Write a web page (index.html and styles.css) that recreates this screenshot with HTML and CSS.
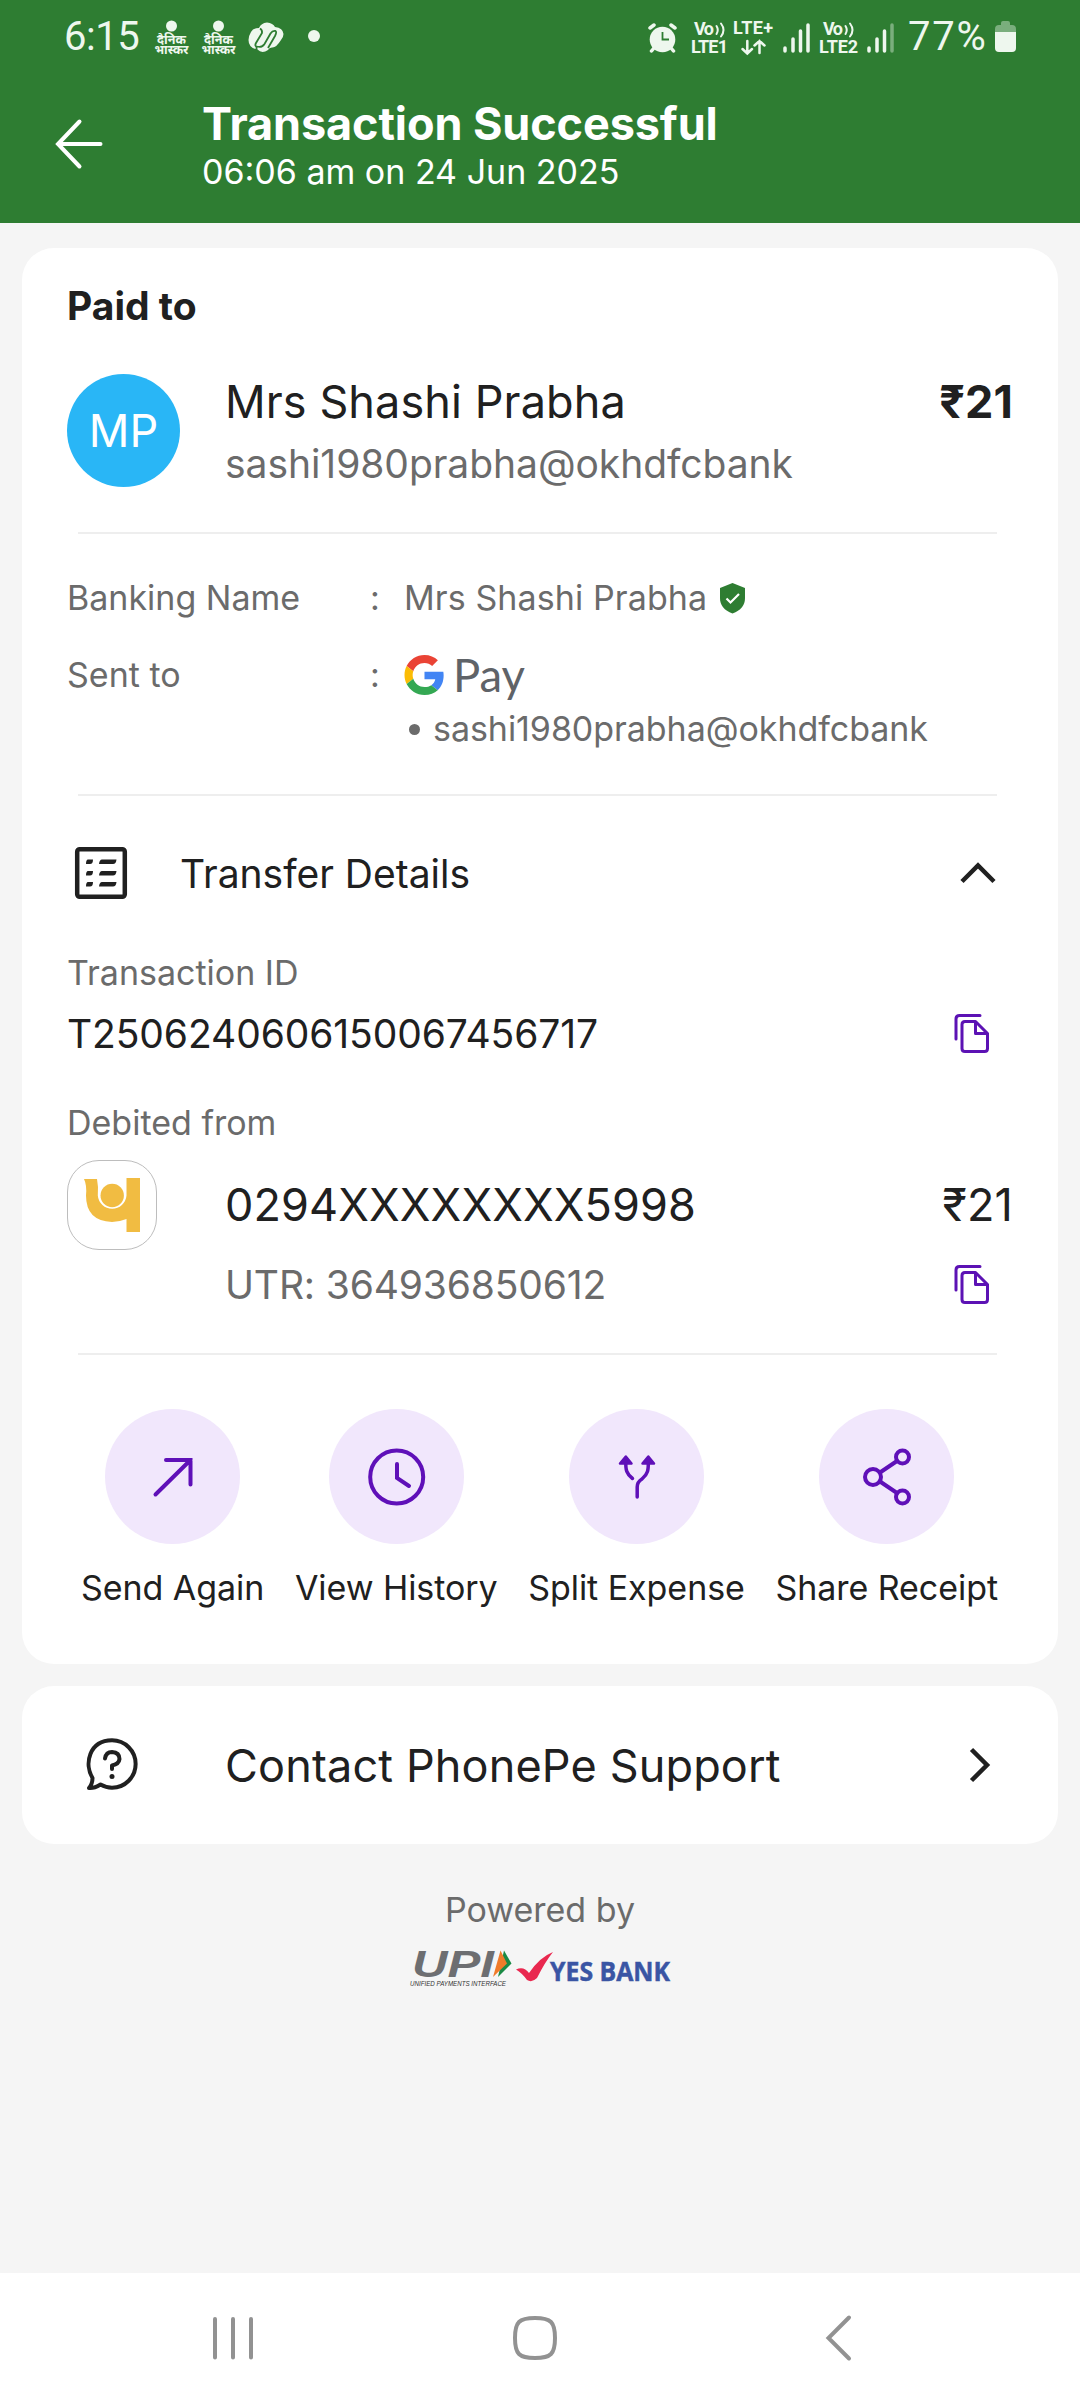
FILE: index.html
```html
<!DOCTYPE html>
<html lang="en">
<head>
<meta charset="utf-8">
<title>Transaction Successful</title>
<link rel="stylesheet" href="styles.css">
</head>
<body>
<header class="header">
  <div class="statusbar">
    <span class="clock">6:15</span>
    <svg class="news" viewBox="154 16 36 40" width="36" height="40"><circle cx="171.500" cy="26" r="5.500"/><text x="157" y="43.500" textLength="29" lengthAdjust="spacingAndGlyphs">दैनिक</text><text x="154.500" y="53.500" textLength="34" lengthAdjust="spacingAndGlyphs">भास्कर</text></svg>
    <svg class="news" viewBox="154 16 36 40" width="36" height="40"><circle cx="171.500" cy="26" r="5.500"/><text x="157" y="43.500" textLength="29" lengthAdjust="spacingAndGlyphs">दैनिक</text><text x="154.500" y="53.500" textLength="34" lengthAdjust="spacingAndGlyphs">भास्कर</text></svg>
    <svg class="knot" viewBox="248 16 36 40" width="36" height="40">
      <path class="fill" d="M251 32Q253 28 259 28Q261 23 267 22.500Q273 23 275 27Q283 28 283.500 34Q283.500 37 281 40Q276 48 272 47.500Q269 47.500 268 50Q262 54 257.500 49.500Q248.500 48 248.500 40Q248.500 36 251 32Z"/>
      <path class="cut" d="M256.500 50V46.500Q254.500 46 256 43L262 33Q262.500 30 260 28.500M257 46.500Q262 48 264.500 44L270.500 33.500Q272.500 30.500 275.500 31Q277 32 275 36L268 48"/>
    </svg>
    <span class="dot"></span>
    <span class="spacer"></span>
    <svg viewBox="648 16 30 40" width="30" height="40">
      <circle class="fill" cx="662.500" cy="39.500" r="12.800"/>
      <path class="line" stroke-width="3.500" d="M650 28L654 25M675 28L671 25M654 48L651.500 51M671 48L673.500 51"/>
      <path class="cut" stroke-width="3" d="M662.500 32V39.500H669"/>
    </svg>
    <svg class="volte" viewBox="690 16 40 40" width="40" height="40"><text x="694" y="35" textLength="20">Vo</text><path class="line" stroke-width="2" d="M716.500 26Q719 30 716.500 34M721 23.500Q726 30 721 36.500"/><text x="691" y="52.500" textLength="37">LTE1</text></svg>
    <svg class="volte lte" viewBox="732 16 42 40" width="42" height="40"><text x="733" y="34" textLength="40">LTE+</text><path class="line" stroke-width="2.500" d="M747.300 41V53M742.500 49L747.300 53.500L752 49M759.500 53V41M754.500 45.500L759.500 41L764.500 45.500"/></svg>
    <svg class="bars" viewBox="782 16 30 40" width="30" height="40"><path d="M785 48V51M793 39V51M800.500 31V51M808 25V51"/></svg>
    <svg class="volte volte2" viewBox="818 16 42 40" width="42" height="40"><text x="823" y="35" textLength="20">Vo</text><path class="line" stroke-width="2" d="M845.500 26Q848 30 845.500 34M850 23.500Q855 30 850 36.500"/><text x="819" y="52.500" textLength="39">LTE2</text></svg>
    <svg class="bars bars2" viewBox="866 16 30 40" width="30" height="40"><path d="M869 48V51M877 39V51M884.500 31V51"/><path opacity=".4" d="M892 25V51"/></svg>
    <span class="battery-level">77%</span>
    <svg viewBox="994 16 24 40" width="24" height="40"><path class="fill" opacity=".4" d="M995 32V29Q995 25 999 25H1001V23Q1001 21 1003 21H1008Q1010 21 1010 23V25H1012Q1016 25 1016 29V32Z"/><path class="fill" d="M995 32H1016V48Q1016 52 1012 52H999Q995 52 995 48Z"/></svg>
  </div>
  <div class="appbar">
    <svg class="back" viewBox="54 118 50 52" width="50" height="52"><path d="M79.500 121.500L58 144L79.500 166.500M58 144H100.500"/></svg>
    <div>
      <h1>Transaction Successful</h1>
      <p>06:06 am on 24 Jun 2025</p>
    </div>
  </div>
</header>

<main>
  <section class="card payment">
    <h2>Paid to</h2>
    <div class="payee">
      <div class="avatar">MP</div>
      <div class="payee-text">
        <div class="big">Mrs Shashi Prabha</div>
        <div class="medium muted">sashi1980prabha@okhdfcbank</div>
      </div>
      <div class="big amount strong">₹21</div>
    </div>
    <hr>
    <div class="facts">
      <span>Banking Name</span><span>:</span>
      <span class="verified">Mrs Shashi Prabha
        <svg viewBox="720 581 27 32" width="27" height="32"><path fill="#2e7d32" d="M733.500 582L746 587V597Q746 608 733.500 612.500Q721 608 721 597V587Z"/><path fill="none" stroke="#fff" stroke-width="2.200" d="M727.500 597.500L731.500 601.500L740 593"/></svg>
      </span>
      <span>Sent to</span><span>:</span>
      <div>
        <svg class="gpay" viewBox="403 652 126 54" width="126" height="54">
          <g transform="translate(403.500 654) scale(.833)">
            <path fill="#EA4335" d="M24 9.500c3.540 0 6.710 1.220 9.210 3.600l6.850-6.850C35.900 2.380 30.470 0 24 0 14.620 0 6.510 5.380 2.560 13.220l7.980 6.190C12.430 13.720 17.740 9.500 24 9.500z"/>
            <path fill="#4285F4" d="M46.980 24.550c0-1.570-.15-3.090-.38-4.550H24v9.020h12.940c-.58 2.960-2.260 5.480-4.780 7.180l7.730 6c4.510-4.180 7.090-10.360 7.090-17.650z"/>
            <path fill="#FBBC05" d="M10.530 28.590c-.48-1.450-.76-2.990-.76-4.590s.27-3.140.76-4.590l-7.980-6.190C.92 16.460 0 20.120 0 24c0 3.880.92 7.540 2.560 10.780l7.970-6.190z"/>
            <path fill="#34A853" d="M24 48c6.480 0 11.930-2.130 15.890-5.810l-7.730-6c-2.150 1.450-4.920 2.300-8.160 2.300-6.260 0-11.570-4.220-13.470-9.910l-7.980 6.190C6.510 42.620 14.620 48 24 48z"/>
          </g>
          <text x="452" y="691" textLength="72" lengthAdjust="spacingAndGlyphs">Pay</text>
        </svg>
        <div class="handle"><span class="bullet"></span>sashi1980prabha@okhdfcbank</div>
      </div>
    </div>
    <hr>
    <div class="transfer">
      <svg viewBox="74 846 54 54" width="54" height="54"><rect x="77.200" y="849.200" width="47.600" height="47.600" rx="2.500" fill="none" stroke="#202020" stroke-width="4.500"/><path fill="#202020" d="M88 859.500H93Q93 864 90 864H86Q86 859.500 88 859.500ZM88 871H93Q93 875.500 90 875.500H86Q86 871 88 871ZM88 882H93Q93 886.500 90 886.500H86Q86 882 88 882ZM102 859.500H116.500Q116 864 113 864H99Q99.500 859.500 102 859.500ZM102 871H116.500Q116 875.500 113 875.500H99Q99.500 871 102 871ZM102 882H116.500Q116 886.500 113 886.500H99Q99.500 882 102 882Z"/></svg>
      <span class="medium">Transfer Details</span>
      <svg viewBox="960 860 38 26" width="38" height="26"><path class="chev" d="M963 881.500L979 865.500L995 881.500"/></svg>
    </div>
    <div class="label txn-label">Transaction ID</div>
    <div class="txn">
      <span class="medium txn-id">T2506240606150067456717</span>
      <svg class="copy" viewBox="954 1012 38 44" width="38" height="44"><path d="M957 1039V1019Q957 1015.500 960.500 1015.500H981M966 1021.500H976.500L988.500 1033.500V1048.500Q988.500 1051.500 985.500 1051.500H966Q963 1051.500 963 1048.500V1024.500Q963 1021.500 966 1021.500ZM976.500 1021.500V1033.500H988.500"/></svg>
    </div>
    <div class="label debit-label">Debited from</div>
    <div class="account">
      <div class="bank-logo">
        <svg viewBox="82 1176 60 58" width="60" height="58"><path d="M84 1179H97Q98.500 1186 97.800 1195.500A14.400 14.400 0 0 0 126.500 1195.500V1178H140V1232H126.500V1219Q119 1222 112 1222Q86 1221 86 1195.500Q87 1185 84 1179Z"/><circle cx="112.200" cy="1195.500" r="11.700"/></svg>
      </div>
      <div class="big">0294XXXXXXXX5998</div>
      <div class="big amount">₹21</div>
    </div>
    <div class="utr">
      <span class="medium muted">UTR: 364936850612</span>
      <svg class="copy" viewBox="954 1012 38 44" width="38" height="44"><path d="M957 1039V1019Q957 1015.500 960.500 1015.500H981M966 1021.500H976.500L988.500 1033.500V1048.500Q988.500 1051.500 985.500 1051.500H966Q963 1051.500 963 1048.500V1024.500Q963 1021.500 966 1021.500ZM976.500 1021.500V1033.500H988.500"/></svg>
    </div>
    <hr>
    <div class="actions">
      <div class="action"><span class="disc"><svg viewBox="106 1409 135 135" width="135" height="135"><path d="M156.500 1494.500L191.500 1460M167 1460H191.500V1484.500"/></svg></span>Send Again</div>
      <div class="action"><span class="disc"><svg viewBox="328 1409 135 135" width="135" height="135"><circle cx="395.700" cy="1477" r="26.500"/><path d="M396 1464V1478L408 1486"/></svg></span>View History</div>
      <div class="action"><span class="disc"><svg viewBox="568 1409 135 135" width="135" height="135"><path class="thin" d="M624.800 1461C624.500 1470 625.500 1474 631.500 1478.500M647.300 1461C647.500 1470 647 1474 641 1479Q636.200 1482 636.200 1487V1497"/><path class="tips" d="M624.800 1456.500L630.500 1463.500H619ZM647.300 1456.500L653 1463.500H641.500Z"/></svg></span>Split Expense</div>
      <div class="action"><span class="disc"><svg viewBox="818 1409 135 135" width="135" height="135"><circle cx="872" cy="1477" r="8"/><circle cx="901.500" cy="1457" r="6.500"/><circle cx="901.500" cy="1497" r="6.500"/><path d="M879 1472.500L896 1461M879 1481.500L896 1493"/></svg></span>Share Receipt</div>
    </div>
  </section>

  <section class="card support">
    <svg viewBox="83 1737 58 58" width="58" height="58"><path class="bubble" d="M92.500 1779C84 1765 89 1741.500 112 1741.300A23.700 23.700 0 0 1 112 1788.700Q106 1788.700 100.500 1785.500Q94 1789.500 89 1789Q92.500 1785 92.500 1779Z"/><path class="bubble" d="M105 1759.500Q106 1753 112 1753Q119.500 1753.500 119.500 1760Q119 1765 112 1766.500V1770"/><circle cx="112" cy="1777.500" r="2.500" fill="#202020"/></svg>
    <span class="big">Contact PhonePe Support</span>
    <svg class="go" viewBox="966 1746 26 38" width="26" height="38"><path class="chev" d="M971.500 1749.500L987 1765L971.500 1780.500"/></svg>
  </section>

  <footer class="powered">
    <p>Powered by</p>
    <svg viewBox="407 1944 268 48" width="268" height="48">
      <text class="upi" x="413" y="1976.500" textLength="82" lengthAdjust="spacingAndGlyphs">UPI</text>
      <path fill="#1a8a45" d="M505 1950.500L512.500 1963.500L499 1977Z"/><path fill="#f07b2a" d="M501.500 1950.500L508 1963.500L494 1977Z"/>
      <text class="upi-name" x="411" y="1986" textLength="96" lengthAdjust="spacingAndGlyphs">UNIFIED PAYMENTS INTERFACE</text>
      <path fill="#e9284f" d="M517 1969.500Q525 1966 530 1973Q541 1957 554 1952Q546 1962 538 1978Q533 1983 528 1980Q523 1973 517 1969.500Z"/>
      <text class="yes" x="551" y="1981" textLength="120" lengthAdjust="spacingAndGlyphs">YES BANK</text>
    </svg>
  </footer>
</main>

<nav class="navbar">
  <svg viewBox="211 2314 44 48" width="44" height="48"><path d="M215 2319V2357.500M233 2319V2357.500M251 2319V2357.500"/></svg>
  <svg class="home" viewBox="511 2314 48 48" width="48" height="48"><path d="M535 2318C551 2318 555 2322 555 2338S551 2358 535 2358S515 2354 515 2338S519 2318 535 2318Z"/></svg>
  <svg class="prev" viewBox="822 2314 32 48" width="32" height="48"><path d="M849 2317.500L828.500 2338L849 2358.500"/></svg>
</nav>
</body>
</html>
```

FILE: styles.css
```css
* { box-sizing: border-box; }
body {
  margin: 0;
  min-height: 2408px;
  display: flex;
  flex-direction: column;
  background: #f5f5f5;
  color: #202020;
  font: 34px/44px Inter, "Noto Sans", sans-serif;
}
h1, h2, p { margin: 0; }
svg { display: block; flex: none; }

.header { height: 223px; background: #2e7d32; color: #fff; }
.statusbar {
  height: 72px;
  padding: 0 62px 0 64px;
  display: flex;
  align-items: center;
  color: #eef7ee;
}
.clock, .battery-level { padding-top: 2px; font: 40px/40px Roboto, sans-serif; }
.clock { width: 90px; letter-spacing: -.5px; }
.battery-level { width: 84px; margin: 0 2px 0 12px; letter-spacing: 1.8px; }
.news { margin-right: 11px; overflow: visible; fill: #eef7ee; font: bold 12px "Noto Sans", sans-serif; }
.knot { margin-right: 24px; }
.dot { width: 12px; height: 12px; border-radius: 50%; background: #eef7ee; }
.spacer { flex: 1; }
.fill { fill: #eef7ee; }
.line { fill: none; stroke: #eef7ee; stroke-linecap: round; }
.cut { fill: none; stroke: #2e7d32; stroke-width: 1.800px; }
.volte { margin-left: 12px; fill: #eef7ee; font: bold 18px Roboto, sans-serif; }
.lte { margin-left: 2px; }
.volte2 { margin-left: 6px; }
.bars { margin-left: 8px; fill: none; stroke: #eef7ee; stroke-width: 3.500px; stroke-linecap: round; }
.bars2 { margin-left: 6px; }
.appbar { display: flex; padding: 25px 54px 0; }
.back { margin: 21px 98px 0 0; fill: none; stroke: #fff; stroke-width: 4px; stroke-linecap: round; }
h1 { font-size: 45px; line-height: 53px; letter-spacing: -.1px; }

main { flex: 1; padding: 25px 22px 0; }
.card { background: #fff; border-radius: 32px; }
.payment { height: 1416px; padding: 34px 45px 0; }
h2 { font-size: 39px; line-height: 48px; }
hr { height: 2px; margin: 0 16px 0 11px; border: 0; background: #eee; }
.big { font-size: 45px; line-height: 56px; letter-spacing: .1px; }
.medium { font-size: 39px; line-height: 48px; }
.muted, .label, .facts { color: #6b6b6b; }
.strong { font-weight: 700; }
.amount { margin-left: auto; }

.payee { display: flex; margin: 44px 0; }
.payee-text { margin-left: 45px; }
.payee-text .medium { margin-top: 10px; letter-spacing: -.05px; }
.avatar {
  width: 113px;
  height: 113px;
  border-radius: 50%;
  background: #29b6f6;
  color: #fff;
  font-size: 45px;
  line-height: 113px;
  text-align: center;
}
.facts { display: grid; grid-template-columns: 303px 34px 1fr; row-gap: 33px; margin: 42px 0 43px; }
.verified { display: flex; align-items: center; gap: 12px; letter-spacing: .1px; }
.gpay { fill: #5f6368; font: 47px Lato, sans-serif; stroke: none; }
.handle { display: flex; align-items: center; letter-spacing: -.05px; }
.bullet { width: 11px; height: 11px; margin: 0 13px 0 5px; border-radius: 50%; background: #6b6b6b; }

.transfer { display: flex; align-items: center; height: 54px; margin-top: 50px; padding: 0 16px 0 7px; }
.transfer .medium { margin: 2px auto 0 52px; }
.chev { fill: none; stroke: #202020; stroke-width: 4.500px; }
.txn-label { margin-top: 51px; }
.txn, .utr { display: flex; justify-content: space-between; align-items: center; height: 48px; padding-right: 22px; }
.txn { margin-top: 15px; }
.txn-id { letter-spacing: -.1px; }
.copy { fill: none; stroke: #5c12b4; stroke-width: 3px; stroke-linejoin: round; stroke-linecap: round; }
.debit-label { margin-top: 43px; }
.account { display: flex; align-items: center; margin-top: 15px; }
.bank-logo {
  width: 90px;
  height: 90px;
  margin-right: 68px;
  padding: 15px 14px;
  border: 1px solid #bdbdbd;
  border-radius: 32px;
  fill: #f1bc42;
}
.utr { margin: 11px 0 44px; padding-left: 158px; }
.utr .medium { letter-spacing: -.15px; }

.actions { display: flex; justify-content: space-between; margin: 54px 15px 0 14px; }
.action { display: flex; flex-direction: column; align-items: center; gap: 22px; letter-spacing: -.05px; }
.disc { border-radius: 50%; background: #f1e7fc; fill: none; stroke: #5f10b8; }
.disc svg { stroke-width: 4px; stroke-linecap: round; }
.disc .thin { stroke-width: 3.500px; }
.disc .tips { fill: #5f10b8; stroke-width: 2.500px; stroke-linejoin: round; }

.support { display: flex; align-items: center; height: 158px; margin-top: 22px; padding: 0 44px 0 61px; }
.support .big { margin: 2px auto 0 84px; letter-spacing: .15px; }
.go { margin-right: 22px; }
.bubble { fill: none; stroke: #202020; stroke-width: 4px; stroke-linecap: round; stroke-linejoin: round; }

.powered { display: flex; flex-direction: column; align-items: center; gap: 12px; margin-top: 44px; color: #6b6b6b; }
.upi { fill: #6d6e71; font: italic bold 36px "Liberation Sans", sans-serif; }
.upi-name { fill: #333; font: italic 7px "Liberation Sans", sans-serif; }
.yes { fill: #3a55a4; font: bold 26px "Open Sans", sans-serif; stroke: #3a55a4; stroke-width: .5px; }

.navbar { height: 135px; display: flex; align-items: center; padding: 0 0 5px 211px; background: #fff; fill: none; stroke: #929292; stroke-width: 4px; stroke-linecap: round; }
.home { margin-left: 256px; }
.prev { margin-left: 263px; }
```
